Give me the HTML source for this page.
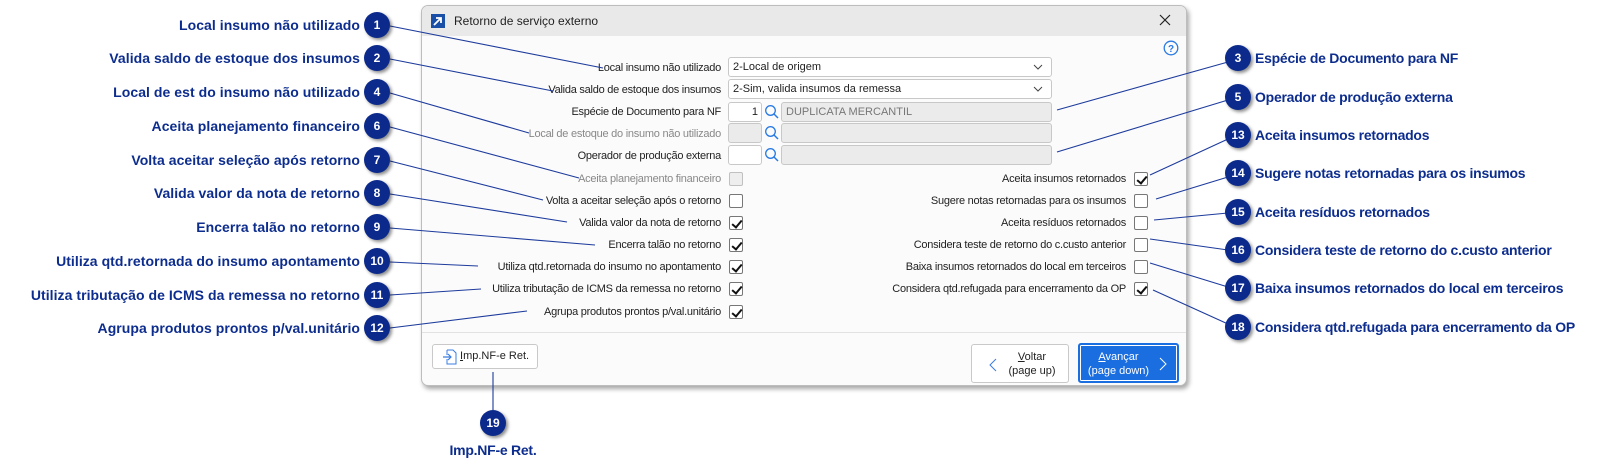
<!DOCTYPE html>
<html><head><meta charset="utf-8"><style>
*{margin:0;padding:0;box-sizing:border-box}
body{width:1621px;height:476px;background:#fff;position:relative;overflow:hidden;font-family:"Liberation Sans",sans-serif}
.ab{position:absolute}
.cl{position:absolute;font-weight:bold;font-size:14px;color:#0d2d8e;white-space:nowrap;letter-spacing:-0.25px;line-height:16px}
.cl.l{text-align:right;letter-spacing:0.05px}
.c{position:absolute;width:26px;height:26px;border-radius:50%;background:#0b2a8c;color:#fff;font-weight:bold;font-size:12px;text-align:center;line-height:26px;box-shadow:2px 2px 3px rgba(0,0,0,.45);z-index:3;letter-spacing:0}
.dlg{position:absolute;left:421px;top:5px;width:766px;height:381px;background:#fbfbfb;border:1px solid #bdbdbd;border-radius:7px;box-shadow:2px 3px 5px rgba(0,0,0,.35);overflow:hidden}
.tb{position:absolute;left:0;top:0;right:0;height:30px;background:#e9e9e9}
.fl{position:absolute;font-size:11px;color:#222;white-space:nowrap;text-align:right;right:0;line-height:14px;letter-spacing:-0.25px}
.lab{position:absolute;font-size:11px;color:#222;white-space:nowrap;line-height:14px}
.in{position:absolute;height:20px;border:1px solid #c8c8c8;border-radius:3px;background:#fff;font-size:11px;line-height:18px;padding-left:4px;color:#222}
.gr{background:#ebebeb;color:#777}
.cb{position:absolute;width:14px;height:14px;border:1px solid #777;border-radius:2px;background:#fff}
.cb.dis{border-color:#c0c0c0;background:#eee}
.cb.k::after{content:"";position:absolute;left:4px;top:1px;width:4px;height:8px;border:solid #111;border-width:0 2px 2px 0;transform:rotate(40deg)}
.btn{position:absolute;border:1px solid #c9c9c9;border-radius:3px;background:#fff;font-size:11px;color:#222;text-align:center}
</style></head><body>

<div class="c" style="left:364px;top:12px">1</div><div class="cl l" style="right:1261px;top:17px">Local insumo não utilizado</div>
<div class="c" style="left:364px;top:45px">2</div><div class="cl l" style="right:1261px;top:50px">Valida saldo de estoque dos insumos</div>
<div class="c" style="left:364px;top:79px">4</div><div class="cl l" style="right:1261px;top:84px">Local de est do insumo não utilizado</div>
<div class="c" style="left:364px;top:113px">6</div><div class="cl l" style="right:1261px;top:118px">Aceita planejamento financeiro</div>
<div class="c" style="left:364px;top:147px">7</div><div class="cl l" style="right:1261px;top:152px">Volta aceitar seleção após retorno</div>
<div class="c" style="left:364px;top:180px">8</div><div class="cl l" style="right:1261px;top:185px">Valida valor da nota de retorno</div>
<div class="c" style="left:364px;top:214px">9</div><div class="cl l" style="right:1261px;top:219px">Encerra talão no retorno</div>
<div class="c" style="left:364px;top:248px">10</div><div class="cl l" style="right:1261px;top:253px">Utiliza qtd.retornada do insumo apontamento</div>
<div class="c" style="left:364px;top:282px">11</div><div class="cl l" style="right:1261px;top:287px">Utiliza tributação de ICMS da remessa no retorno</div>
<div class="c" style="left:364px;top:315px">12</div><div class="cl l" style="right:1261px;top:320px">Agrupa produtos prontos p/val.unitário</div>

<div class="c" style="left:1225px;top:45px">3</div><div class="cl" style="left:1255px;top:50px">Espécie de Documento para NF</div>
<div class="c" style="left:1225px;top:84px">5</div><div class="cl" style="left:1255px;top:89px">Operador de produção externa</div>
<div class="c" style="left:1225px;top:122px">13</div><div class="cl" style="left:1255px;top:127px">Aceita insumos retornados</div>
<div class="c" style="left:1225px;top:160px">14</div><div class="cl" style="left:1255px;top:165px">Sugere notas retornadas para os insumos</div>
<div class="c" style="left:1225px;top:199px">15</div><div class="cl" style="left:1255px;top:204px">Aceita resíduos retornados</div>
<div class="c" style="left:1225px;top:237px">16</div><div class="cl" style="left:1255px;top:242px">Considera teste de retorno do c.custo anterior</div>
<div class="c" style="left:1225px;top:275px">17</div><div class="cl" style="left:1255px;top:280px">Baixa insumos retornados do local em terceiros</div>
<div class="c" style="left:1225px;top:314px">18</div><div class="cl" style="left:1255px;top:319px">Considera qtd.refugada para encerramento da OP</div>

<div class="c" style="left:480px;top:410px">19</div>
<div class="cl" style="left:433px;width:120px;text-align:center;top:442px">Imp.NF-e Ret.</div>

<div class="dlg">
 <div class="tb">
  <div class="ab" style="left:9px;top:8px;width:14px;height:14px;background:#1a4fa8"><svg width="14" height="14"><path d="M3 11 L10 4 M5 4 H10 V9" stroke="#fff" stroke-width="1.8" fill="none"/></svg></div>
  <div class="lab" style="left:32px;top:8px;font-size:12px">Retorno de serviço externo</div>
  <svg class="ab" style="left:737px;top:8px" width="12" height="12"><path d="M1 1L11 11M11 1L1 11" stroke="#222" stroke-width="1.2"/></svg>
 </div>
 <svg class="ab" style="left:741px;top:34px" width="16" height="16"><circle cx="8" cy="8" r="6.8" stroke="#2a7ae2" stroke-width="1.3" fill="none"/><text x="8" y="12" font-size="10" font-family="Liberation Sans" text-anchor="middle" fill="#2a7ae2" font-weight="bold">?</text></svg>

 <div class="fl" style="right:465px;top:55px">Local insumo não utilizado</div>
 <div class="fl" style="right:465px;top:77px">Valida saldo de estoque dos insumos</div>
 <div class="fl" style="right:465px;top:99px">Espécie de Documento para NF</div>
 <div class="fl" style="right:465px;top:121px;color:#888">Local de estoque do insumo não utilizado</div>
 <div class="fl" style="right:465px;top:143px">Operador de produção externa</div>
 <div class="fl" style="right:465px;top:166px;color:#888">Aceita planejamento financeiro</div>
 <div class="fl" style="right:465px;top:188px">Volta a aceitar seleção após o retorno</div>
 <div class="fl" style="right:465px;top:210px">Valida valor da nota de retorno</div>
 <div class="fl" style="right:465px;top:232px">Encerra talão no retorno</div>
 <div class="fl" style="right:465px;top:254px">Utiliza qtd.retornada do insumo no apontamento</div>
 <div class="fl" style="right:465px;top:276px">Utiliza tributação de ICMS da remessa no retorno</div>
 <div class="fl" style="right:465px;top:299px">Agrupa produtos prontos p/val.unitário</div>

 <div class="in" style="left:306px;top:51px;width:324px">2-Local de origem<svg class="ab" style="right:8px;top:6px" width="10" height="6"><path d="M1 1L5 5L9 1" stroke="#444" fill="none"/></svg></div>
 <div class="in" style="left:306px;top:73px;width:324px">2-Sim, valida insumos da remessa<svg class="ab" style="right:8px;top:6px" width="10" height="6"><path d="M1 1L5 5L9 1" stroke="#444" fill="none"/></svg></div>
 <div class="in" style="left:306px;top:96px;width:34px;text-align:right;padding-right:3px">1</div>
 <div class="in gr" style="left:359px;top:96px;width:271px">DUPLICATA MERCANTIL</div>
 <div class="in gr" style="left:306px;top:117px;width:34px"></div>
 <div class="in gr" style="left:359px;top:117px;width:271px"></div>
 <div class="in" style="left:306px;top:139px;width:34px"></div>
 <div class="in gr" style="left:359px;top:139px;width:271px"></div>
 <svg class="ab" style="left:342px;top:98px" width="16" height="16"><circle cx="6.5" cy="6.5" r="4.8" stroke="#2a7ae2" stroke-width="1.3" fill="none"/><path d="M10 10L14 14" stroke="#2a7ae2" stroke-width="1.5"/></svg>
 <svg class="ab" style="left:342px;top:119px" width="16" height="16"><circle cx="6.5" cy="6.5" r="4.8" stroke="#2a7ae2" stroke-width="1.3" fill="none"/><path d="M10 10L14 14" stroke="#2a7ae2" stroke-width="1.5"/></svg>
 <svg class="ab" style="left:342px;top:141px" width="16" height="16"><circle cx="6.5" cy="6.5" r="4.8" stroke="#2a7ae2" stroke-width="1.3" fill="none"/><path d="M10 10L14 14" stroke="#2a7ae2" stroke-width="1.5"/></svg>

 <div class="cb dis" style="left:307px;top:166px"></div>
 <div class="cb" style="left:307px;top:188px"></div>
 <div class="cb k" style="left:307px;top:210px"></div>
 <div class="cb k" style="left:307px;top:232px"></div>
 <div class="cb k" style="left:307px;top:254px"></div>
 <div class="cb k" style="left:307px;top:276px"></div>
 <div class="cb k" style="left:307px;top:299px"></div>

 <div class="fl" style="right:60px;top:166px">Aceita insumos retornados</div>
 <div class="fl" style="right:60px;top:188px">Sugere notas retornadas para os insumos</div>
 <div class="fl" style="right:60px;top:210px">Aceita resíduos retornados</div>
 <div class="fl" style="right:60px;top:232px">Considera teste de retorno do c.custo anterior</div>
 <div class="fl" style="right:60px;top:254px">Baixa insumos retornados do local em terceiros</div>
 <div class="fl" style="right:60px;top:276px">Considera qtd.refugada para encerramento da OP</div>
 <div class="cb k" style="left:712px;top:166px"></div>
 <div class="cb" style="left:712px;top:188px"></div>
 <div class="cb" style="left:712px;top:210px"></div>
 <div class="cb" style="left:712px;top:232px"></div>
 <div class="cb" style="left:712px;top:254px"></div>
 <div class="cb k" style="left:712px;top:276px"></div>

 <div class="ab" style="left:0;right:0;top:326px;height:1px;background:#e2e2e2"></div>

 <div class="btn" style="left:10px;top:338px;width:106px;height:25px;line-height:23px;text-align:left;padding-left:27px"><span style="text-decoration:underline">I</span>mp.NF-e Ret.
  <svg class="ab" style="left:9px;top:4px" width="16" height="16"><path d="M5 1H11L14 4V15H5V10M5 6V1" stroke="#3b7de0" fill="none"/><path d="M1 8H9M6 5L9 8L6 11" stroke="#3b7de0" stroke-width="1.2" fill="none"/></svg></div>
 <div class="btn" style="left:549px;top:338px;width:98px;height:39px;padding-top:5px;line-height:14px">
  <svg class="ab" style="left:17px;top:13px" width="8" height="14"><path d="M7 1L1 7L7 13" stroke="#3b7de0" fill="none"/></svg>
  <div style="padding-left:24px"><span style="text-decoration:underline">V</span>oltar<br>(page up)</div></div>
 <div class="btn" style="left:656px;top:337px;width:101px;height:40px;padding-top:5px;line-height:14px;background:#1a6ee0;border:2px solid #1a6ee0;box-shadow:inset 0 0 0 1px #fff;color:#fff">
  <div style="padding-right:20px"><span style="text-decoration:underline">A</span>vançar<br>(page down)</div>
  <svg class="ab" style="right:10px;top:12px" width="8" height="14"><path d="M1 1L7 7L1 13" stroke="#fff" fill="none"/></svg></div>
</div>

<svg class="ab" style="left:0;top:0;z-index:2" width="1621" height="476">
<g stroke="#1d3b9c" stroke-width="1.1" fill="none">
<line x1="390" y1="26" x2="603" y2="68"/>
<line x1="390" y1="59" x2="553" y2="91"/>
<line x1="390" y1="93" x2="529" y2="133"/>
<line x1="390" y1="127" x2="579" y2="178"/>
<line x1="390" y1="161" x2="543" y2="200"/>
<line x1="390" y1="194" x2="567" y2="222"/>
<line x1="390" y1="228" x2="595" y2="245"/>
<line x1="390" y1="262" x2="478" y2="266"/>
<line x1="390" y1="295" x2="481" y2="289"/>
<line x1="390" y1="328" x2="527" y2="311"/>
<line x1="1057" y1="110" x2="1228" y2="62"/>
<line x1="1057" y1="152" x2="1228" y2="100"/>
<line x1="1150" y1="175" x2="1228" y2="139"/>
<line x1="1156" y1="199" x2="1228" y2="177"/>
<line x1="1154" y1="220" x2="1228" y2="213"/>
<line x1="1150" y1="239" x2="1228" y2="250"/>
<line x1="1150" y1="263" x2="1228" y2="287"/>
<line x1="1153" y1="290" x2="1228" y2="324"/>
<line x1="493" y1="372" x2="493" y2="410"/>
</g></svg>
</body></html>
